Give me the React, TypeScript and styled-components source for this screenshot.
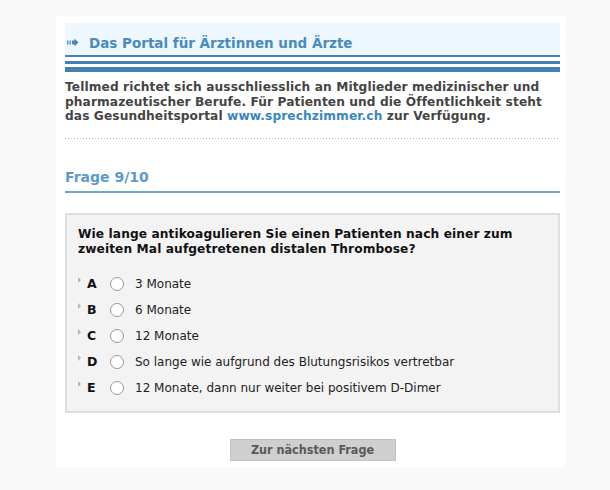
import React from "react"
import styled, { createGlobalStyle } from "styled-components"

const GlobalStyle = createGlobalStyle`
  html, body {
    margin: 0;
    padding: 0;
    background: #f9f9f9;
  }
  body {
    font-family: "DejaVu Sans", Verdana, sans-serif;
  }
`

const Page = styled.div`
  width: 610px;
  height: 490px;
  padding: 16px 0 0 56px;
  box-sizing: border-box;
`

const Panel = styled.div`
  width: 510px;
  height: 451px;
  background: #ffffff;
  padding: 7px 6px 0 9px;
  box-sizing: border-box;
  display: flex;
  flex-direction: column;

  & > * {
    flex-shrink: 0;
  }
`

const PortalHeader = styled.div`
  height: 32px;
  background: #eef6fe;
  display: flex;
  align-items: center;
  gap: 10px;
  padding: 7px 0 0 2px;
  box-sizing: border-box;
`

const PortalTitle = styled.h1`
  margin: 0;
  font-size: 13.5px;
  font-weight: bold;
  color: #4a8bbd;
`

const Rule = styled.div<{ $h: number; $gap: number }>`
  height: ${(p) => p.$h}px;
  margin-top: ${(p) => p.$gap}px;
  background: #4581b2;
`

const Intro = styled.p`
  margin: 8px 0 0;
  font-size: 12.2px;
  line-height: 14.5px;
  font-weight: bold;
  color: #444444;
  letter-spacing: 0.1px;
`

const IntroLink = styled.a`
  color: #3a86c0;
  text-decoration: none;
`

const Dotted = styled.div`
  margin-top: 14px;
  height: 1px;
  background-image: linear-gradient(to right, #96c4e6 1px, transparent 1px);
  background-size: 3px 1px;
`

const SectionTitle = styled.h2`
  margin: 30px 0 0;
  padding-bottom: 5px;
  font-size: 14px;
  font-weight: bold;
  color: #5a9bcc;
  border-bottom: 2px solid #6aa7d3;
  line-height: 17px;
`

const QuestionBox = styled.div`
  margin-top: 20px;
  background: #f3f3f3;
  border: 2px solid #dedede;
  padding: 12px 12px 14px 11px;
  height: 200px;
  box-sizing: border-box;
`

const QuestionText = styled.p`
  margin: 0;
  font-size: 12.2px;
  line-height: 15px;
  font-weight: bold;
  color: #111111;
  letter-spacing: 0.1px;
`

const Options = styled.div`
  margin-top: 18px;
  display: flex;
  flex-direction: column;
  gap: 8px;
`

const Option = styled.label`
  display: flex;
  align-items: center;
  height: 18px;
  font-size: 12px;
  color: #222222;
`

const Marker = styled.span`
  width: 0;
  height: 0;
  border-top: 3px solid transparent;
  border-bottom: 3px solid transparent;
  border-left: 3px solid #b5b5b5;
  margin: 0 6px 0 0;
  transform: translateY(-4px);
`

const Letter = styled.span`
  width: 19px;
  font-weight: bold;
  font-size: 12.5px;
  color: #111111;
`

const Radio = styled.span`
  width: 14px;
  height: 14px;
  border-radius: 50%;
  border: 1px solid #999999;
  background: #ffffff;
  box-sizing: border-box;
  margin: 0 11px 0 4px;
`

const ButtonRow = styled.div`
  display: flex;
  justify-content: center;
  margin-top: 26px;
`

const NextButton = styled.button`
  width: 166px;
  height: 22px;
  background: #cfcfcf;
  border: 1px solid #c3c3c3;
  font-family: "DejaVu Sans Condensed", "DejaVu Sans", sans-serif;
  font-size: 12.5px;
  font-weight: bold;
  color: #595959;
  padding: 0;
`

const Arrow = () => (
  <svg width="12" height="9" viewBox="0 0 12 9">
    <rect x="0" y="2.5" width="1.5" height="4" fill="#5a94c4" />
    <rect x="2.5" y="2.5" width="1.5" height="4" fill="#5a94c4" />
    <path d="M5 2.5 H7.5 V0.5 L11.5 4.5 L7.5 8.5 V6.5 H5 Z" fill="#4a86bb" />
  </svg>
)

const answers = [
  { letter: "A", text: "3 Monate" },
  { letter: "B", text: "6 Monate" },
  { letter: "C", text: "12 Monate" },
  { letter: "D", text: "So lange wie aufgrund des Blutungsrisikos vertretbar" },
  { letter: "E", text: "12 Monate, dann nur weiter bei positivem D-Dimer" },
]

const App: React.FC = () => {
  return (
    <Page>
      <GlobalStyle />
      <Panel>
        <PortalHeader>
          <Arrow />
          <PortalTitle>Das Portal für Ärztinnen und Ärzte</PortalTitle>
        </PortalHeader>
        <Rule $h={2} $gap={0} />
        <Rule $h={3} $gap={4} />
        <Rule $h={5} $gap={3} />
        <Intro>
          Tellmed richtet sich ausschliesslich an Mitglieder medizinischer und
          pharmazeutischer Berufe. Für Patienten und die Öffentlichkeit steht
          das Gesundheitsportal <IntroLink href="#">www.sprechzimmer.ch</IntroLink> zur
          Verfügung.
        </Intro>
        <Dotted />
        <SectionTitle>Frage 9/10</SectionTitle>
        <QuestionBox>
          <QuestionText>
            Wie lange antikoagulieren Sie einen Patienten nach einer zum
            zweiten Mal aufgetretenen distalen Thrombose?
          </QuestionText>
          <Options>
            {answers.map((a) => (
              <Option key={a.letter}>
                <Marker />
                <Letter>{a.letter}</Letter>
                <Radio />
                {a.text}
              </Option>
            ))}
          </Options>
        </QuestionBox>
        <ButtonRow>
          <NextButton>Zur nächsten Frage</NextButton>
        </ButtonRow>
      </Panel>
    </Page>
  )
}

export default App
